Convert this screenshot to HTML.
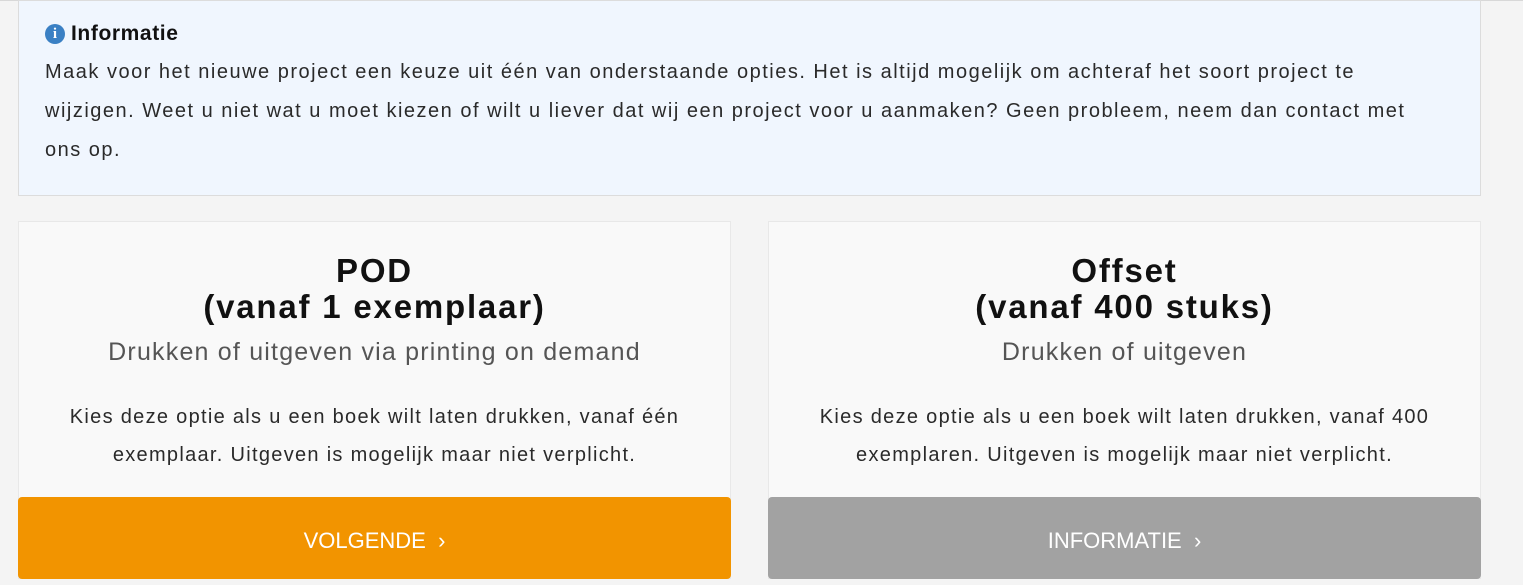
<!DOCTYPE html>
<html><head><meta charset="utf-8"><style>
*{box-sizing:border-box;margin:0;padding:0}
body{width:1523px;height:585px;background:#f4f4f4;font-family:"Liberation Sans",sans-serif;color:#222;overflow:hidden;position:relative;border-top:1px solid #d8d8d8}
.info{position:absolute;left:18px;top:-1px;width:1463px;height:196px;background:#f0f6fe;border:1px solid #dcdcdc;padding:20px 26px}
.info h4{font-size:21px;letter-spacing:0.6px;font-weight:bold;color:#111;display:flex;align-items:center;height:26px}
.info h4 .i{width:20px;height:20px;border-radius:50%;background:#3a80c4;color:#fff;font-size:15px;font-weight:bold;display:inline-flex;align-items:center;justify-content:center;margin-right:6px;font-family:"Liberation Serif",serif;letter-spacing:0}
.info p{font-size:20px;letter-spacing:1.5px;line-height:39px;color:#2a2a2a;white-space:nowrap;margin-top:6px}
.card{position:absolute;top:220px;width:713px;height:358px;background:#f9f9f9;border:1px solid #e8e8e8;text-align:center}
.card h2{font-size:33px;letter-spacing:1.8px;line-height:36px;font-weight:bold;color:#111;margin-top:31px}
.card .sub{font-size:25px;letter-spacing:1.2px;font-weight:300;color:#555;margin-top:10px;line-height:34px}
.card .d{font-size:20px;letter-spacing:1.3px;line-height:38px;color:#2a2a2a;margin-top:29px;white-space:nowrap}
.btn{position:absolute;left:-1px;right:-1px;top:275px;height:82px;border-radius:4px;color:#fff;font-size:22px;display:flex;align-items:center;justify-content:center;padding-top:6px}
</style></head><body>
<div class="info">
<h4><span class="i">i</span>Informatie</h4>
<p>Maak voor het nieuwe project een keuze uit één van onderstaande opties. Het is altijd mogelijk om achteraf het soort project te<br>wijzigen. Weet u niet wat u moet kiezen of wilt u liever dat wij een project voor u aanmaken? Geen probleem, neem dan contact met<br>ons op.</p>
</div>
<div class="card" style="left:18px">
<h2>POD<br>(vanaf 1 exemplaar)</h2>
<div class="sub">Drukken of uitgeven via printing on demand</div>
<div class="d">Kies deze optie als u een boek wilt laten drukken, vanaf één<br>exemplaar. Uitgeven is mogelijk maar niet verplicht.</div>
<div class="btn" style="background:#f29400">VOLGENDE&nbsp;&nbsp;›</div>
</div>
<div class="card" style="left:768px">
<h2>Offset<br>(vanaf 400 stuks)</h2>
<div class="sub">Drukken of uitgeven</div>
<div class="d">Kies deze optie als u een boek wilt laten drukken, vanaf 400<br>exemplaren. Uitgeven is mogelijk maar niet verplicht.</div>
<div class="btn" style="background:#a2a2a2">INFORMATIE&nbsp;&nbsp;›</div>
</div>
</body></html>
